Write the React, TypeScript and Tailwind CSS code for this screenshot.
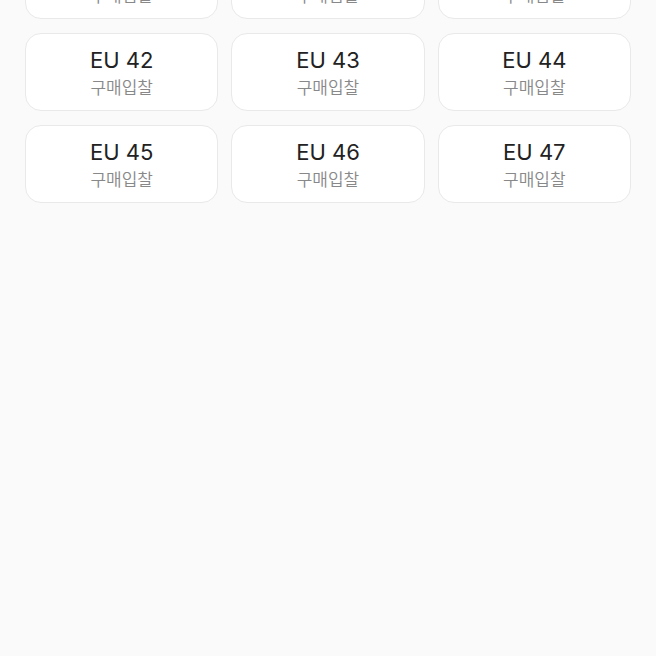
const sizes = ['EU 39', 'EU 40', 'EU 41', 'EU 42', 'EU 43', 'EU 44', 'EU 45', 'EU 46', 'EU 47']

function SizeButton({ size }: { size: string }) {
    return (
        <button
            type="button"
            className="flex flex-col items-center rounded-2xl border border-[#e9e9e9] bg-white pt-3 pb-2"
        >
            <span className="text-[22px] leading-[28px] text-[#222222]">{size}</span>
            <span className="text-[17px] leading-[28px] font-[350] text-[#888888]">구매입찰</span>
        </button>
    )
}

export default function App() {
    return (
        <main className="flex min-h-screen flex-col overflow-hidden bg-[#fafafa] px-[25px] font-['Inter','Noto_Sans_CJK_KR',sans-serif]">
            <div className="-mt-[59px] grid grid-cols-3 gap-x-[13px] gap-y-[14px]">
                {sizes.map((size) => (
                    <SizeButton key={size} size={size} />
                ))}
            </div>
        </main>
    )
}
